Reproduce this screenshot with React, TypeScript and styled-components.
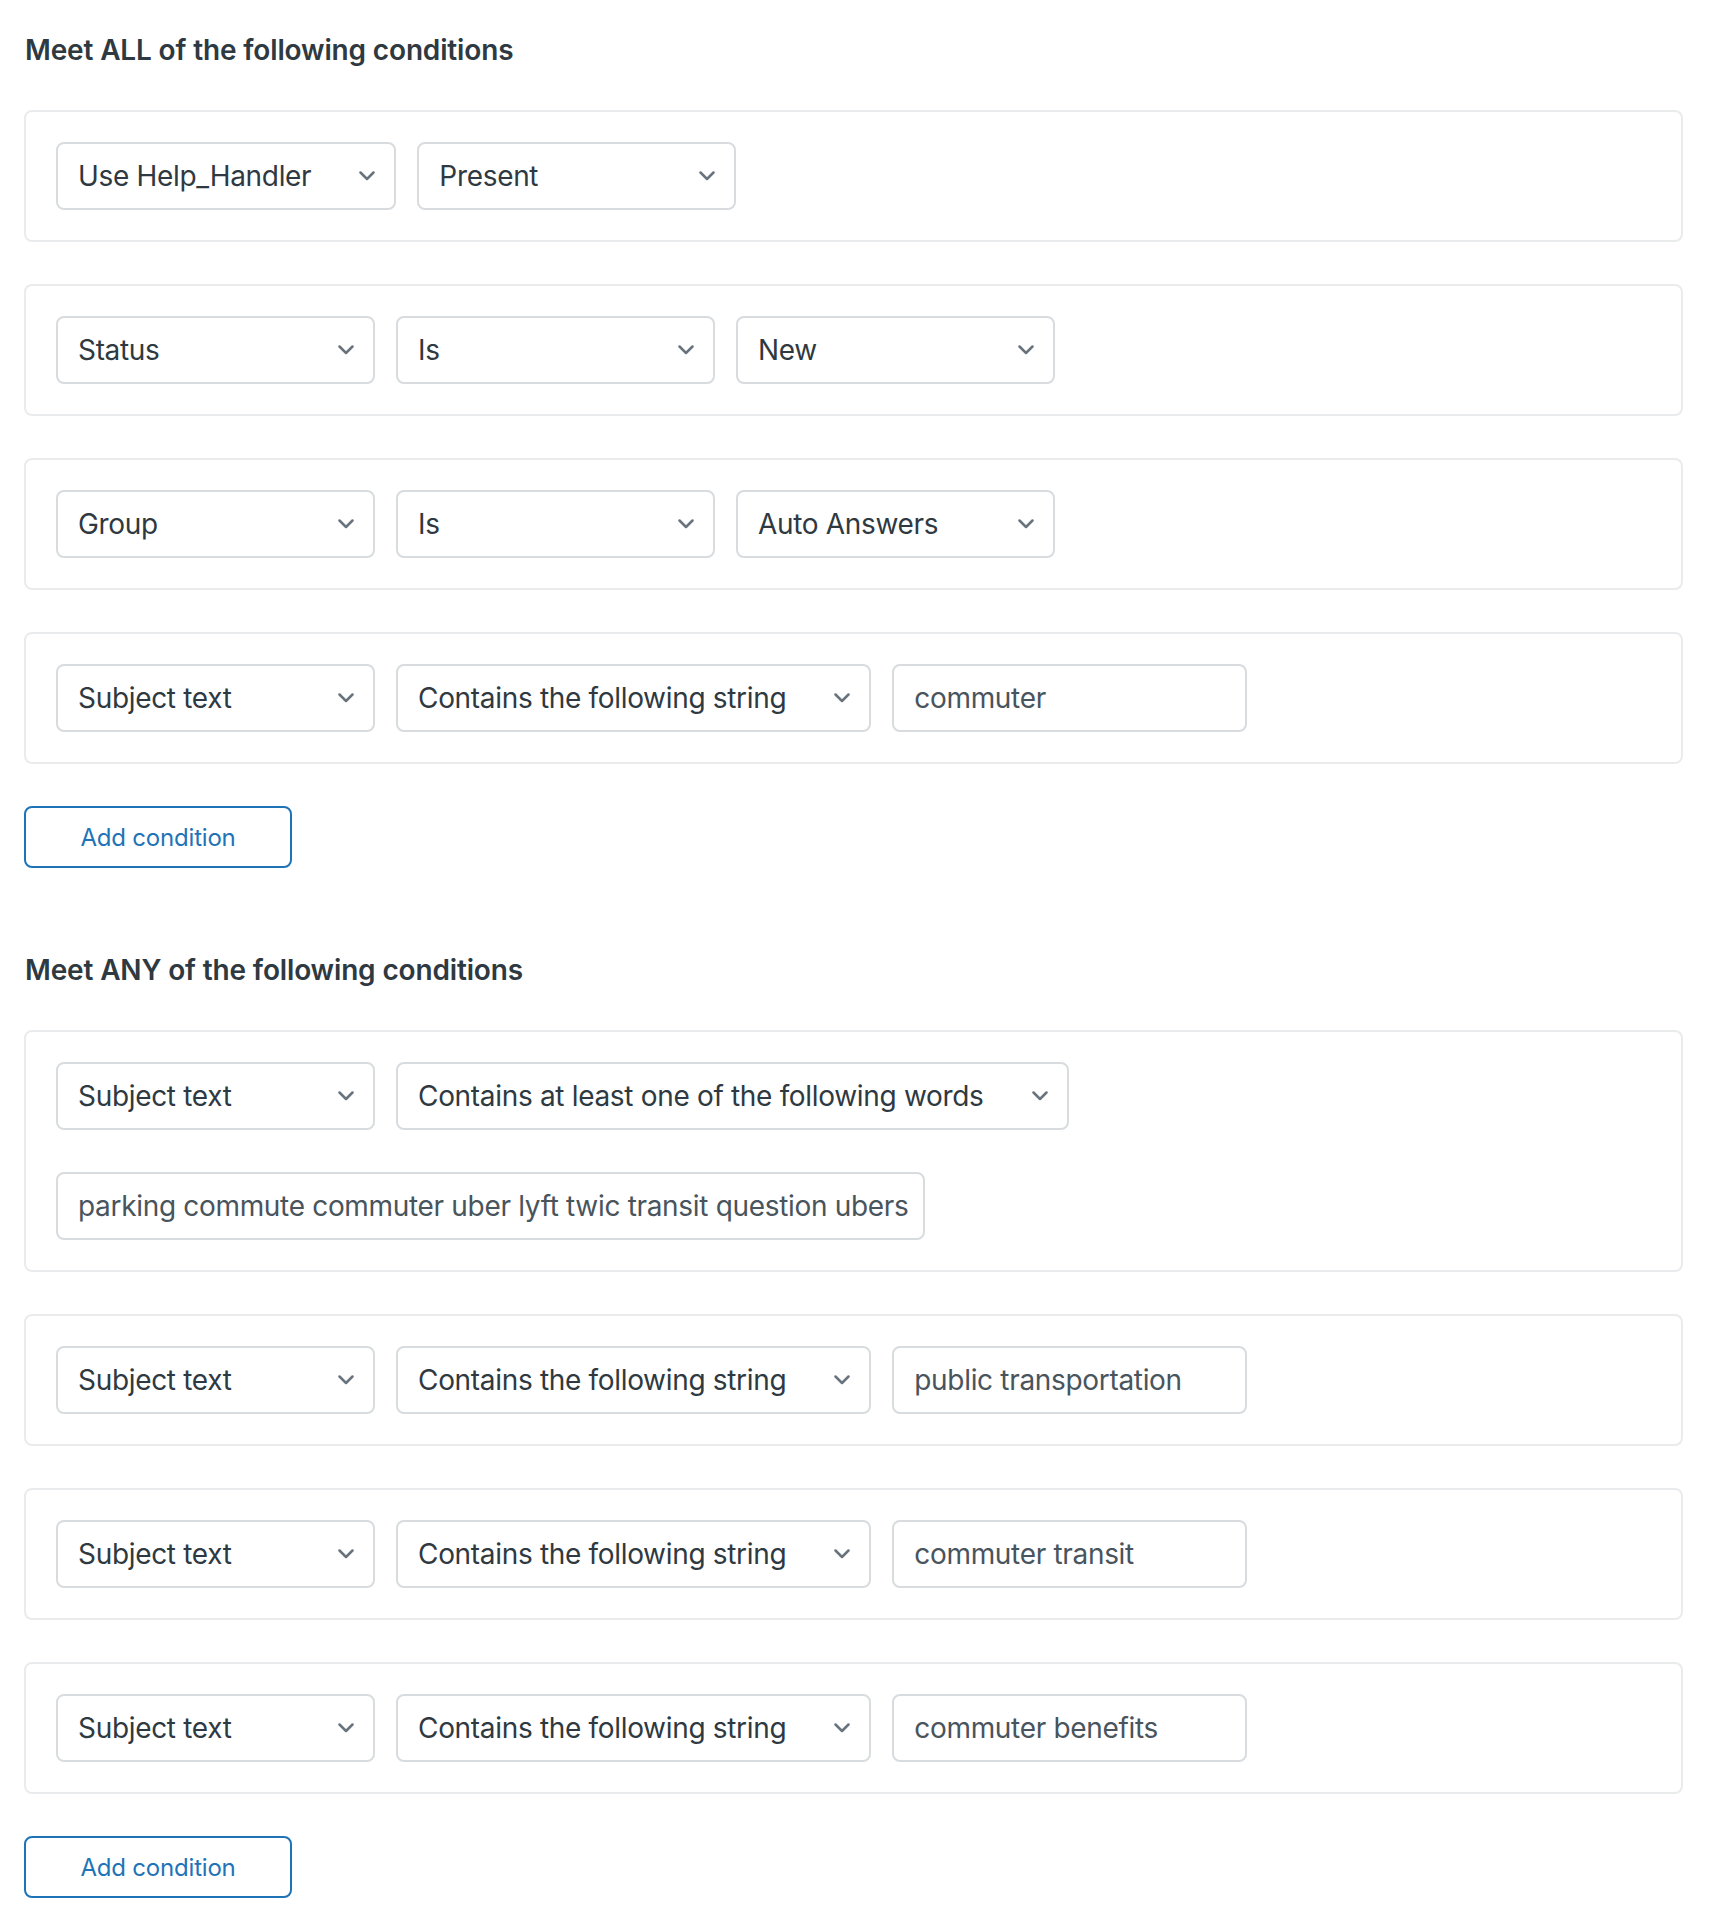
import React from 'react';
import styled, { createGlobalStyle } from 'styled-components';

const GlobalStyle = createGlobalStyle`
  body {
    margin: 0;
    background: #fff;
    font-family: Inter, "Noto Sans", "Liberation Sans", sans-serif;
    color: #2f3941;
  }
`;

const Page = styled.div`
  padding: 30px 43px 40px 24px;
`;

const Section = styled.section`
  & + & {
    margin-top: 82px;
  }
`;

const Heading = styled.h2`
  margin: 0 0 40px;
  font-size: 28px;
  line-height: 40px;
  font-weight: 600;
  letter-spacing: -0.15px;
  color: #2f3941;
  padding-left: 1px;
`;

const CardList = styled.div`
  display: flex;
  flex-direction: column;
  gap: 42px;
`;

const Card = styled.div`
  border: 2px solid #e9ebed;
  border-radius: 8px;
  padding: 30px;
  display: flex;
  flex-direction: column;
  gap: 42px;
`;

const Row = styled.div`
  display: flex;
  gap: 21px;
`;

const SelectBox = styled.div`
  box-sizing: border-box;
  height: 68px;
  min-width: 319px;
  display: inline-flex;
  align-items: center;
  justify-content: space-between;
  gap: 48px;
  padding: 0 19px 0 20px;
  border: 2px solid #d8dcde;
  border-radius: 8px;
  font-size: 28px;
  letter-spacing: -0.32px;
  color: #2f3941;
  white-space: nowrap;
`;

const Chevron = styled.svg`
  flex: none;
  color: #68737d;
`;

const TextField = styled.input<{ $width: number }>`
  box-sizing: border-box;
  height: 68px;
  width: ${({ $width }) => $width}px;
  padding: 0 12px 0 20px;
  border: 2px solid #d8dcde;
  border-radius: 8px;
  font-family: inherit;
  font-size: 28px;
  letter-spacing: -0.32px;
  color: #49545c;
  background: #fff;
  outline: none;
`;

const AddButton = styled.button`
  margin-top: 42px;
  width: 268px;
  height: 62px;
  border: 2px solid #1f73b7;
  border-radius: 8px;
  background: #fff;
  color: #1f73b7;
  font-family: inherit;
  font-size: 24px;
  letter-spacing: -0.2px;
  cursor: pointer;
`;

const Select: React.FC<{ label: string }> = ({ label }) => (
  <SelectBox>
    <span>{label}</span>
    <Chevron width="16" height="10" viewBox="0 0 16 10" fill="none">
      <polyline
        points="1.5 1.5 8 8 14.5 1.5"
        stroke="currentColor"
        strokeWidth="2.5"
        strokeLinecap="round"
        strokeLinejoin="round"
      />
    </Chevron>
  </SelectBox>
);

interface Condition {
  selects: string[];
  value?: string;
  valueWidth?: number;
  wrapValue?: boolean;
}

const allConditions: Condition[] = [
  { selects: ['Use Help_Handler', 'Present'] },
  { selects: ['Status', 'Is', 'New'] },
  { selects: ['Group', 'Is', 'Auto Answers'] },
  { selects: ['Subject text', 'Contains the following string'], value: 'commuter' },
];

const anyConditions: Condition[] = [
  {
    selects: ['Subject text', 'Contains at least one of the following words'],
    value: 'parking commute commuter uber lyft twic transit question ubers',
    valueWidth: 869,
    wrapValue: true,
  },
  { selects: ['Subject text', 'Contains the following string'], value: 'public transportation' },
  { selects: ['Subject text', 'Contains the following string'], value: 'commuter transit' },
  { selects: ['Subject text', 'Contains the following string'], value: 'commuter benefits' },
];

const ConditionCard: React.FC<{ condition: Condition }> = ({ condition }) => {
  const field = condition.value !== undefined && (
    <TextField $width={condition.valueWidth ?? 355} defaultValue={condition.value} readOnly />
  );
  return (
    <Card>
      <Row>
        {condition.selects.map((s, i) => (
          <Select key={i} label={s} />
        ))}
        {!condition.wrapValue && field}
      </Row>
      {condition.wrapValue && <Row>{field}</Row>}
    </Card>
  );
};

const ConditionGroup: React.FC<{ title: string; conditions: Condition[] }> = ({ title, conditions }) => (
  <Section>
    <Heading>{title}</Heading>
    <CardList>
      {conditions.map((c, i) => (
        <ConditionCard key={i} condition={c} />
      ))}
    </CardList>
    <AddButton>Add condition</AddButton>
  </Section>
);

const App: React.FC = () => (
  <Page>
    <GlobalStyle />
    <ConditionGroup title="Meet ALL of the following conditions" conditions={allConditions} />
    <ConditionGroup title="Meet ANY of the following conditions" conditions={anyConditions} />
  </Page>
);

export default App;
